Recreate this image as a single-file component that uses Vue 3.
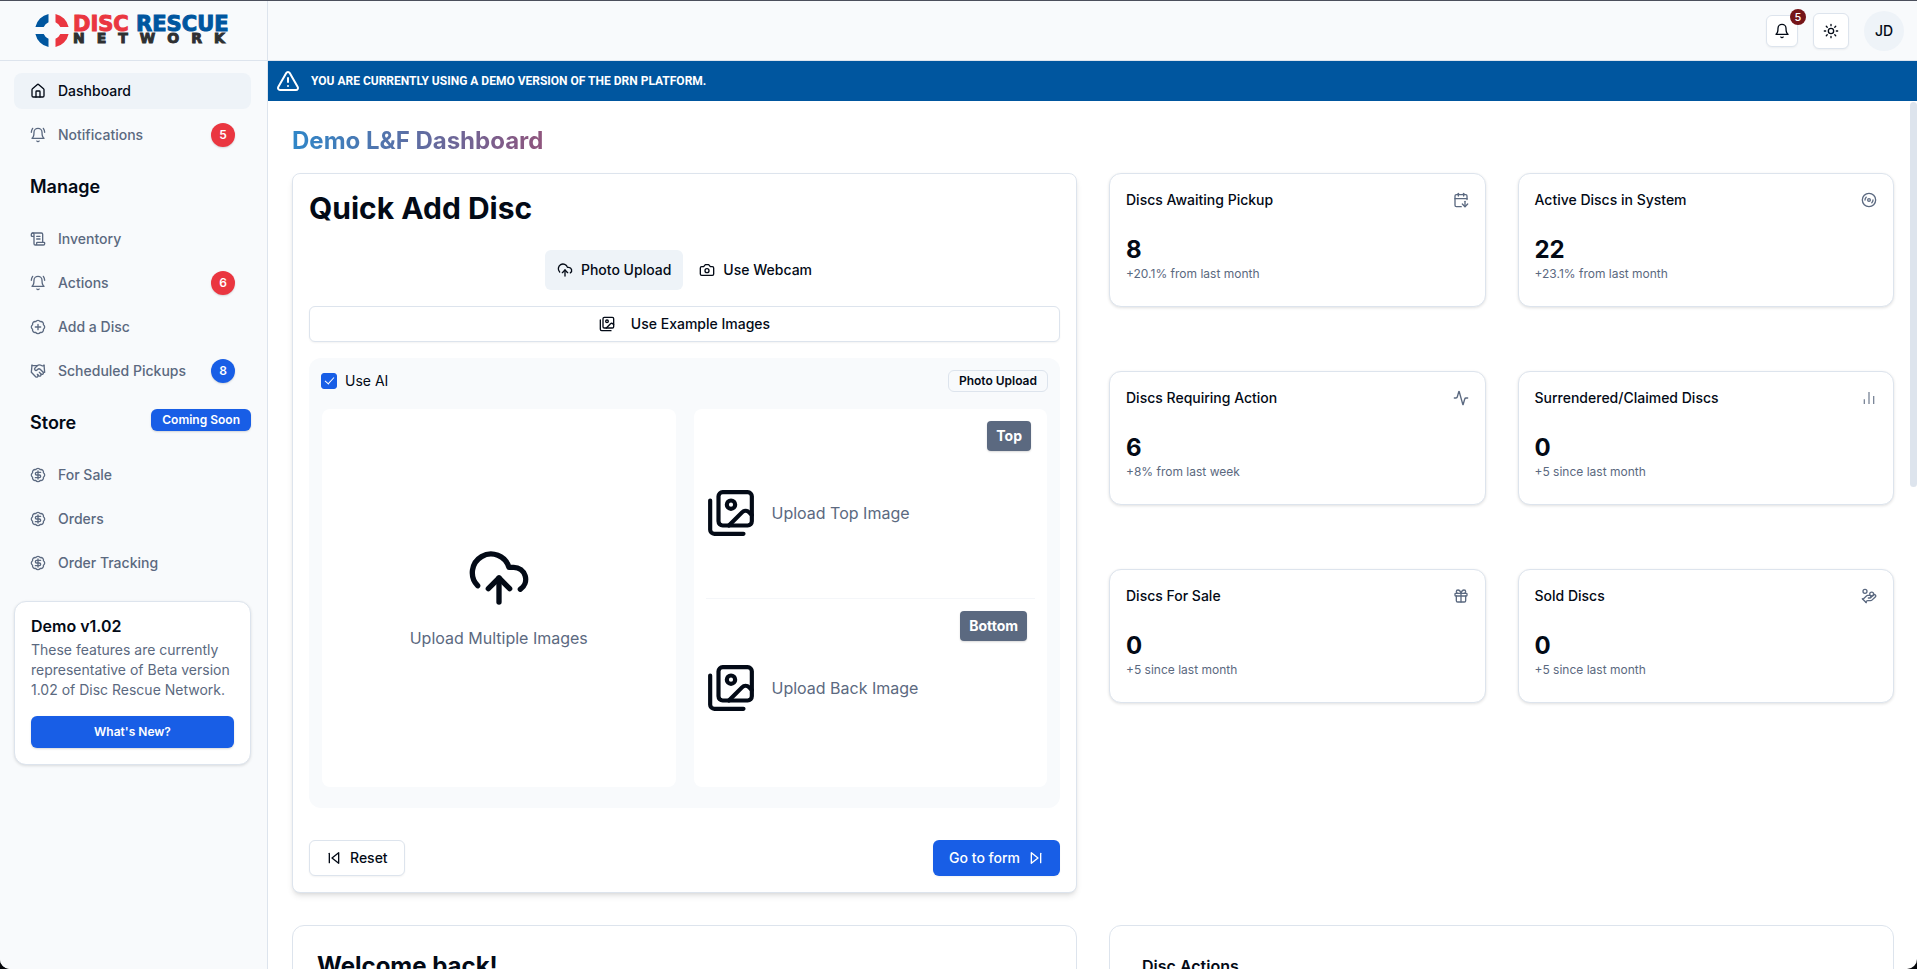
<script setup>
import { h, ref } from 'vue'

const badge = '<path d="M3.85 8.62a4 4 0 0 1 4.78-4.77 4 4 0 0 1 6.74 0 4 4 0 0 1 4.78 4.78 4 4 0 0 1 0 6.74 4 4 0 0 1-4.77 4.78 4 4 0 0 1-6.75 0 4 4 0 0 1-4.78-4.77 4 4 0 0 1 0-6.76Z"/>'
const glyphs = {
  home: '<path d="M15 21v-8a1 1 0 0 0-1-1h-4a1 1 0 0 0-1 1v8"/><path d="M3 10a2 2 0 0 1 .709-1.528l7-5.999a2 2 0 0 1 2.582 0l7 5.999A2 2 0 0 1 21 10v9a2 2 0 0 1-2 2H5a2 2 0 0 1-2-2z"/>',
  bell: '<path d="M6 8a6 6 0 0 1 12 0c0 7 3 9 3 9H3s3-2 3-9"/><path d="M10.3 21a1.94 1.94 0 0 0 3.4 0"/>',
  bellRing: '<path d="M6 8a6 6 0 0 1 12 0c0 7 3 9 3 9H3s3-2 3-9"/><path d="M10.3 21a1.94 1.94 0 0 0 3.4 0"/><path d="M4 2C2.8 3.7 2 5.7 2 8"/><path d="M22 8c0-2.3-.8-4.3-2-6"/>',
  scroll: '<path d="M15 12h-5"/><path d="M15 8h-5"/><path d="M19 17V5a2 2 0 0 0-2-2H4"/><path d="M8 21h12a2 2 0 0 0 2-2v-1a1 1 0 0 0-1-1H11a1 1 0 0 0-1 1v1a2 2 0 1 1-4 0V5a2 2 0 1 0-4 0v2a1 1 0 0 0 1 1h3"/>',
  badgePlus: badge + '<path d="M12 8v8M8 12h8"/>',
  badgeDollar: badge + '<path d="M16 8h-6a2 2 0 1 0 0 4h4a2 2 0 1 1 0 4H8"/><path d="M12 18V6"/>',
  handshake: '<path d="m11 17 2 2a1 1 0 1 0 3-3"/><path d="m14 14 2.5 2.5a1 1 0 1 0 3-3l-3.88-3.88a3 3 0 0 0-4.24 0l-.88.88a1 1 0 1 1-3-3l2.81-2.81a5.79 5.79 0 0 1 7.06-.87l.47.28a2 2 0 0 0 1.42.25L21 4"/><path d="m21 3 1 11h-2"/><path d="M3 3 2 14l6.5 6.5a1 1 0 1 0 3-3"/><path d="M3 4h8"/>',
  sun: '<circle cx="12" cy="12" r="4"/><path d="M12 2v2M12 20v2M4.93 4.93l1.41 1.41M17.66 17.66l1.41 1.41M2 12h2M20 12h2M6.34 17.66l-1.41 1.41M19.07 4.93l-1.41 1.41"/>',
  alert: '<path d="m21.73 18-8-14a2 2 0 0 0-3.48 0l-8 14A2 2 0 0 0 4 21h16a2 2 0 0 0 1.73-3"/><path d="M12 9v4"/><path d="M12 17h.01"/>',
  cloud: '<path d="M4 14.899A7 7 0 1 1 15.71 8h1.79a4.5 4.5 0 0 1 2.5 8.242"/><path d="M12 12v9"/><path d="m16 16-4-4-4 4"/>',
  camera: '<path d="M14.5 4h-5L7 7H4a2 2 0 0 0-2 2v9a2 2 0 0 0 2 2h16a2 2 0 0 0 2-2V9a2 2 0 0 0-2-2h-3l-2.5-3z"/><circle cx="12" cy="13" r="3"/>',
  images: '<path d="M18 22H4a2 2 0 0 1-2-2V6"/><path d="m22 13-1.296-1.296a2.41 2.41 0 0 0-3.408 0L11 18"/><circle cx="12" cy="8" r="2"/><rect width="16" height="16" x="6" y="2" rx="2"/>',
  skipBack: '<path d="M19 20 9 12l10-8z"/><path d="M5 19V5"/>',
  skipForward: '<path d="m5 4 10 8-10 8z"/><path d="M19 5v14"/>',
  calendar: '<path d="m14 18 4 4 4-4"/><path d="M16 2v4"/><path d="M18 14v8"/><path d="M21 11.354V6a2 2 0 0 0-2-2H5a2 2 0 0 0-2 2v14a2 2 0 0 0 2 2h7.343"/><path d="M3 10h18"/><path d="M8 2v4"/>',
  disc: '<circle cx="12" cy="12" r="10"/><path d="M6 12c0-1.7.7-3.2 1.8-4.2"/><circle cx="12" cy="12" r="2"/><path d="M18 12c0 1.7-.7 3.2-1.8 4.2"/>',
  activity: '<path d="M22 12h-2.48a2 2 0 0 0-1.93 1.46l-2.35 8.36a.25.25 0 0 1-.48 0L9.24 2.18a.25.25 0 0 0-.48 0l-2.35 8.36A2 2 0 0 1 4.49 12H2"/>',
  bars: '<path stroke-linecap="butt" stroke-opacity=".8" d="M5 21v-7M12 21V3M19 21V9"/>',
  gift: '<rect x="3" y="8" width="18" height="4" rx="1"/><path d="M12 8v13"/><path d="M19 12v7a2 2 0 0 1-2 2H7a2 2 0 0 1-2-2v-7"/><path d="M7.5 8a2.5 2.5 0 0 1 0-5A4.8 8 0 0 1 12 8a4.8 8 0 0 1 4.5-5 2.5 2.5 0 0 1 0 5"/>',
  coins: '<path d="M11 15h2a2 2 0 1 0 0-4h-3c-.6 0-1.1.2-1.4.6L3 17"/><path d="m7 21 1.6-1.4c.3-.4.8-.6 1.4-.6h4c1.1 0 2.1-.4 2.8-1.2l4.6-4.4a2 2 0 0 0-2.75-2.91l-4.2 3.9"/><path d="m2 16 6 6"/><circle cx="16" cy="9" r="2.9"/><circle cx="6" cy="5" r="3"/>'
}

const Icon = (props) =>
  h('svg', {
    width: props.size || 16,
    height: props.size || 16,
    viewBox: '0 0 24 24',
    fill: 'none',
    stroke: 'currentColor',
    'stroke-width': 2,
    'stroke-linecap': 'round',
    'stroke-linejoin': 'round',
    'aria-hidden': 'true',
    innerHTML: glyphs[props.name]
  })
Icon.props = ['name', 'size']

const groups = [
  {
    items: [
      { label: 'Dashboard', icon: 'home', active: true },
      { label: 'Notifications', icon: 'bellRing', count: 5, tone: 'red' }
    ]
  },
  {
    title: 'Manage',
    items: [
      { label: 'Inventory', icon: 'scroll' },
      { label: 'Actions', icon: 'bellRing', count: 6, tone: 'red' },
      { label: 'Add a Disc', icon: 'badgePlus' },
      { label: 'Scheduled Pickups', icon: 'handshake', count: 8, tone: 'blue' }
    ]
  },
  {
    title: 'Store',
    tag: 'Coming Soon',
    items: [
      { label: 'For Sale', icon: 'badgeDollar' },
      { label: 'Orders', icon: 'badgeDollar' },
      { label: 'Order Tracking', icon: 'badgeDollar' }
    ]
  }
]

const stats = [
  { title: 'Discs Awaiting Pickup', value: 8, note: '+20.1% from last month', icon: 'calendar' },
  { title: 'Active Discs in System', value: 22, note: '+23.1% from last month', icon: 'disc' },
  { title: 'Discs Requiring Action', value: 6, note: '+8% from last week', icon: 'activity' },
  { title: 'Surrendered/Claimed Discs', value: 0, note: '+5 since last month', icon: 'bars' },
  { title: 'Discs For Sale', value: 0, note: '+5 since last month', icon: 'gift' },
  { title: 'Sold Discs', value: 0, note: '+5 since last month', icon: 'coins' }
]

const useAi = ref(true)
const mode = ref('upload')
</script>

<template>
  <div class="app">
    <aside class="sidebar">
      <a href="#" class="logo">
        <svg class="ring" width="34" height="35" viewBox="0 0 34 35" aria-hidden="true">
          <g fill="#00569f">
            <path d="M13.5.9A17 17 0 0 0 .4 14h8.3a9 9 0 0 1 4.8-4.8z" />
            <path d="M13.5 34.1A17 17 0 0 1 .4 21h8.3a9 9 0 0 0 4.8 4.8z" />
          </g>
          <g fill="#ea3640">
            <path d="M20.5.9A17 17 0 0 1 33.6 14h-8.3a9 9 0 0 0-4.8-4.8z" />
            <path d="M20.5 34.1A17 17 0 0 0 33.6 21h-8.3a9 9 0 0 1-4.8 4.8z" />
          </g>
        </svg>
        <span class="wordmark">
          <span class="word-top"><span class="word-red">DISC</span> RESCUE</span>
          <span class="word-bottom">NETWORK</span>
        </span>
      </a>
      <nav class="nav">
        <section v-for="(group, i) in groups" :key="i" class="group">
          <div v-if="group.title" class="group-head">
            <h2>{{ group.title }}</h2>
            <span v-if="group.tag" class="tag">{{ group.tag }}</span>
          </div>
          <div class="links">
            <a v-for="item in group.items" :key="item.label" href="#" class="link" :class="{ active: item.active }">
              <Icon :name="item.icon" />
              <span>{{ item.label }}</span>
              <span v-if="item.count" class="count" :class="item.tone">{{ item.count }}</span>
            </a>
          </div>
        </section>
        <section class="demo">
          <h3>Demo v1.02</h3>
          <p>These features are currently representative of Beta version 1.02 of Disc Rescue Network.</p>
          <button type="button">What's New?</button>
        </section>
      </nav>
    </aside>

    <div class="body">
      <header class="topbar">
        <button type="button" class="square bell" aria-label="Notifications">
          <Icon name="bell" />
          <span class="bell-count">5</span>
        </button>
        <button type="button" class="square theme" aria-label="Toggle theme"><Icon name="sun" /></button>
        <button type="button" class="avatar">JD</button>
      </header>
      <div class="banner">
        <Icon name="alert" :size="24" />
        <p>YOU ARE CURRENTLY USING A DEMO VERSION OF THE DRN PLATFORM.</p>
      </div>

      <main class="main">
        <h1>Demo L&amp;F Dashboard</h1>
        <div class="columns">
          <section class="quick">
            <h2>Quick Add Disc</h2>
            <div class="modes">
              <button type="button" :class="{ on: mode === 'upload' }" @click="mode = 'upload'">
                <Icon name="cloud" />Photo Upload
              </button>
              <button type="button" :class="{ on: mode === 'webcam' }" @click="mode = 'webcam'">
                <Icon name="camera" />Use Webcam
              </button>
            </div>
            <button type="button" class="outline example"><Icon name="images" />Use Example Images</button>

            <div class="panel">
              <div class="panel-head">
                <label class="check">
                  <input v-model="useAi" type="checkbox" />
                  <span>Use AI</span>
                </label>
                <span class="pill">Photo Upload</span>
              </div>
              <div class="drops">
                <button type="button" class="drop multi">
                  <Icon name="cloud" :size="64" />
                  <span>Upload Multiple Images</span>
                </button>
                <div class="drop pair">
                  <button type="button" class="side top">
                    <Icon name="images" :size="50" />
                    <span>Upload Top Image</span>
                    <span class="label">Top</span>
                  </button>
                  <button type="button" class="side bottom">
                    <Icon name="images" :size="50" />
                    <span>Upload Back Image</span>
                    <span class="label">Bottom</span>
                  </button>
                </div>
              </div>
            </div>

            <div class="actions">
              <button type="button" class="outline"><Icon name="skipBack" />Reset</button>
              <button type="button" class="primary">Go to form<Icon name="skipForward" /></button>
            </div>
          </section>

          <div class="stats">
            <article v-for="stat in stats" :key="stat.title" class="stat">
              <div class="stat-head">
                <h3>{{ stat.title }}</h3>
                <Icon :name="stat.icon" />
              </div>
              <strong>{{ stat.value }}</strong>
              <p>{{ stat.note }}</p>
            </article>
          </div>

          <section class="lower welcome"><h2>Welcome back!</h2></section>
          <section class="lower disc-actions"><h3>Disc Actions</h3></section>
        </div>
        <div class="thumb"></div>
      </main>
    </div>
  </div>
</template>

<style>
html {
  background: #05070b;
}
body {
  margin: 0;
}
</style>

<style scoped>
.app {
  --ink: #030a16;
  --muted: #5b6980;
  --line: #dde4ed;
  --blue: #185ee6;
  --navy: #00569f;
  --red: #ea3640;
  --soft: #f8fafc;
  --tint: #eef3f8;
  display: grid;
  grid-template-columns: 268px minmax(0, 1fr);
  box-sizing: border-box;
  height: 100vh;
  overflow: hidden;
  border-top: 1px solid #4b4f5c;
  border-radius: 0 0 10px 10px;
  background: #fff;
  color: var(--ink);
  font: 14px/20px Inter, "Liberation Sans", sans-serif;
}
.app *,
.app *::before {
  box-sizing: border-box;
}
h1, h2, h3, p {
  margin: 0;
}
a {
  color: inherit;
  text-decoration: none;
}
button {
  font: inherit;
  color: inherit;
  padding: 0;
  border: 0;
  background: none;
  cursor: pointer;
}
svg {
  flex: none;
}

.sidebar {
  border-right: 1px solid var(--line);
  background: var(--soft);
}
.logo {
  display: flex;
  align-items: center;
  gap: 4px;
  height: 60px;
  padding-left: 35px;
  border-bottom: 1px solid var(--line);
}
.wordmark {
  display: flex;
  flex-direction: column;
  color: #2e3032;
  font-family: "DejaVu Sans", sans-serif;
  font-weight: 700;
  white-space: nowrap;
}
.word-top {
  color: var(--navy);
  font-size: 21px;
  line-height: 16px;
  -webkit-text-stroke: 1px;
}
.word-red {
  color: var(--red);
}
.word-bottom {
  font-size: 14px;
  line-height: 13px;
  letter-spacing: 12px;
  -webkit-text-stroke: 1px;
}
.nav {
  display: flex;
  flex-direction: column;
  gap: 20px;
  padding: 12px 16px 0 14px;
}
.group {
  display: flex;
  flex-direction: column;
  gap: 20px;
}
.group-head {
  display: flex;
  justify-content: space-between;
  align-items: flex-start;
  padding-left: 16px;
}
.group-head h2 {
  font-size: 18px;
  line-height: 28px;
  font-weight: 600;
}
.tag {
  padding: 3px 11px;
  border-radius: 6px;
  background: var(--blue);
  color: #fff;
  font-size: 12px;
  line-height: 16px;
  font-weight: 600;
  box-shadow: 0 1px 2px rgba(0, 0, 0, 0.15);
}
.links {
  display: flex;
  flex-direction: column;
  gap: 8px;
}
.link {
  display: flex;
  align-items: center;
  gap: 12px;
  height: 36px;
  padding: 0 16px;
  border-radius: 8px;
  color: var(--muted);
  font-weight: 500;
}
.link.active {
  background: var(--tint);
  color: var(--ink);
}
.count {
  display: flex;
  align-items: center;
  justify-content: center;
  width: 24px;
  height: 24px;
  margin-left: auto;
  border-radius: 50%;
  color: #fff;
  font-size: 12px;
  font-weight: 600;
  box-shadow: 0 1px 2px rgba(0, 0, 0, 0.15);
}
.count.red {
  background: var(--red);
}
.count.blue {
  background: var(--blue);
}
.demo {
  padding: 16px;
  border: 1px solid var(--line);
  border-radius: 12px;
  background: #fff;
  box-shadow: 0 1px 3px rgba(0, 0, 0, 0.12);
}
.demo h3 {
  margin-bottom: 6px;
  font-size: 16px;
  line-height: 16px;
  font-weight: 600;
}
.demo p {
  color: var(--muted);
}
.demo button {
  width: 100%;
  height: 32px;
  margin-top: 16px;
  border-radius: 6px;
  background: var(--blue);
  color: #fff;
  font-size: 12px;
  font-weight: 600;
  box-shadow: 0 1px 2px rgba(0, 0, 0, 0.15);
}

.body {
  display: flex;
  flex-direction: column;
  min-width: 0;
  min-height: 0;
}
.topbar {
  display: flex;
  flex: none;
  align-items: center;
  justify-content: flex-end;
  gap: 15px;
  height: 60px;
  padding-right: 13px;
  border-bottom: 1px solid var(--line);
  background: var(--soft);
}
.square {
  display: grid;
  place-items: center;
  position: relative;
  width: 36px;
  height: 36px;
  border: 1px solid var(--line);
  border-radius: 6px;
  background: #fff;
  box-shadow: 0 1px 2px rgba(0, 0, 0, 0.05);
}
.bell {
  width: 32px;
  height: 32px;
}
.bell-count {
  position: absolute;
  top: -7px;
  right: -9px;
  width: 16px;
  height: 16px;
  border-radius: 50%;
  background: #761519;
  color: #fff;
  font-size: 11px;
  line-height: 16px;
  font-weight: 500;
  text-align: center;
}
.avatar {
  width: 40px;
  height: 40px;
  border-radius: 50%;
  background: var(--tint);
  font-weight: 500;
}
.banner {
  display: flex;
  flex: none;
  align-items: center;
  gap: 11px;
  height: 40px;
  padding-left: 8px;
  background: var(--navy);
  color: #fff;
}
.banner p {
  font-family: Roboto, "Liberation Sans", sans-serif;
  font-size: 12px;
  font-weight: 700;
}

.main {
  position: relative;
  flex: 1;
  min-height: 0;
  overflow: hidden;
  padding: 24px 23px 24px 24px;
}
.thumb {
  position: absolute;
  top: 1px;
  right: 0;
  width: 7px;
  height: 385px;
  border-radius: 4px;
  background: #dde4ed;
}
h1 {
  width: max-content;
  margin-bottom: 16px;
  background: linear-gradient(90deg, #2f86c8, #8f557d);
  background-clip: text;
  -webkit-background-clip: text;
  color: transparent;
  font-size: 24px;
  line-height: 32px;
  font-weight: 700;
}
.columns {
  display: grid;
  grid-template-columns: repeat(2, minmax(0, 1fr));
  gap: 32px;
}
.quick {
  padding: 16px;
  border: 1px solid var(--line);
  border-radius: 8px;
  background: #fff;
  box-shadow: 0 4px 6px -1px rgba(0, 0, 0, 0.1), 0 2px 4px -2px rgba(0, 0, 0, 0.1);
}
.quick h2 {
  font-size: 30px;
  line-height: 36px;
  font-weight: 700;
}
.modes {
  display: flex;
  justify-content: center;
  gap: 4px;
  margin-top: 24px;
}
.modes button {
  display: flex;
  align-items: center;
  gap: 8px;
  height: 40px;
  padding: 0 12px;
  border-radius: 6px;
  font-weight: 500;
}
.modes .on {
  background: var(--tint);
}
.outline,
.primary {
  display: flex;
  align-items: center;
  justify-content: center;
  gap: 8px;
  height: 36px;
  padding: 0 16px;
  border: 1px solid var(--line);
  border-radius: 6px;
  background: #fff;
  font-weight: 500;
  box-shadow: 0 1px 2px rgba(0, 0, 0, 0.05);
}
.primary {
  border: 0;
  background: var(--blue);
  color: #fff;
}
.example {
  gap: 16px;
  width: 100%;
  margin: 16px 0;
}
.panel {
  padding: 12px 12px 21px;
  border-radius: 12px;
  background: var(--soft);
}
.panel-head {
  display: flex;
  align-items: center;
  justify-content: space-between;
  margin-bottom: 17px;
}
.check {
  display: flex;
  align-items: center;
  gap: 8px;
}
.check input {
  appearance: none;
  display: grid;
  place-items: center;
  width: 16px;
  height: 16px;
  margin: 0;
  border: 1px solid var(--blue);
  border-radius: 3px;
}
.check input:checked {
  background: var(--blue);
}
.check input:checked::before {
  content: "";
  width: 5px;
  height: 9px;
  margin-bottom: 3px;
  border: solid #fff;
  border-width: 0 1px 1px 0;
  transform: rotate(42deg);
}
.pill {
  padding: 2px 10px;
  border: 1px solid var(--line);
  border-radius: 6px;
  font-size: 12px;
  line-height: 16px;
  font-weight: 600;
}
.drops {
  display: grid;
  grid-template-columns: repeat(2, minmax(0, 1fr));
  gap: 18px;
  padding: 0 1px;
}
.drop {
  min-height: 378px;
  border-radius: 8px;
  background: #fff;
  font-size: 16px;
  line-height: 24px;
}
.drop span {
  color: var(--muted);
}
.multi {
  display: flex;
  flex-direction: column;
  align-items: center;
  justify-content: center;
  gap: 16px;
}
.pair {
  display: grid;
  grid-template-rows: 1fr 1fr;
  padding: 12px 12px 10px;
}
.side {
  display: flex;
  align-items: center;
  gap: 16px;
  position: relative;
}
.side.top {
  padding-top: 6px;
  border-bottom: 1px solid #f4f6f9;
}
.drop .label {
  position: absolute;
  top: 0;
  right: 4px;
  padding: 5px 9px;
  border-radius: 4px;
  background: var(--muted);
  color: #fff;
  font-size: 14px;
  line-height: 20px;
  font-weight: 700;
  box-shadow: 0 1px 2px rgba(0, 0, 0, 0.15);
}
.drop .bottom .label {
  top: 12px;
  right: 8px;
}
.actions {
  display: flex;
  justify-content: space-between;
  margin-top: 32px;
}

.stats {
  display: grid;
  grid-template-columns: repeat(2, minmax(0, 1fr));
  align-content: start;
  gap: 64px 32px;
}
.stat {
  padding: 16px 16px 24px;
  border: 1px solid var(--line);
  border-radius: 12px;
  background: #fff;
  box-shadow: 0 1px 3px rgba(0, 0, 0, 0.12);
}
.stat-head {
  display: flex;
  align-items: center;
  justify-content: space-between;
  margin-bottom: 24px;
}
.stat-head svg {
  color: var(--muted);
}
.stat h3 {
  font-size: 14px;
  line-height: 20px;
  font-weight: 500;
}
.stat strong {
  display: block;
  font-size: 24px;
  line-height: 32px;
  font-weight: 700;
}
.stat p {
  color: var(--muted);
  font-size: 12px;
  line-height: 16px;
}
.lower {
  min-height: 160px;
  padding: 24px;
  border: 1px solid var(--line);
  border-radius: 12px;
  background: #fff;
}
.lower h2 {
  font-size: 24px;
  line-height: 32px;
  font-weight: 700;
}
.disc-actions {
  padding: 32px;
}
.lower h3 {
  font-size: 16px;
  line-height: 16px;
  font-weight: 600;
}
</style>
